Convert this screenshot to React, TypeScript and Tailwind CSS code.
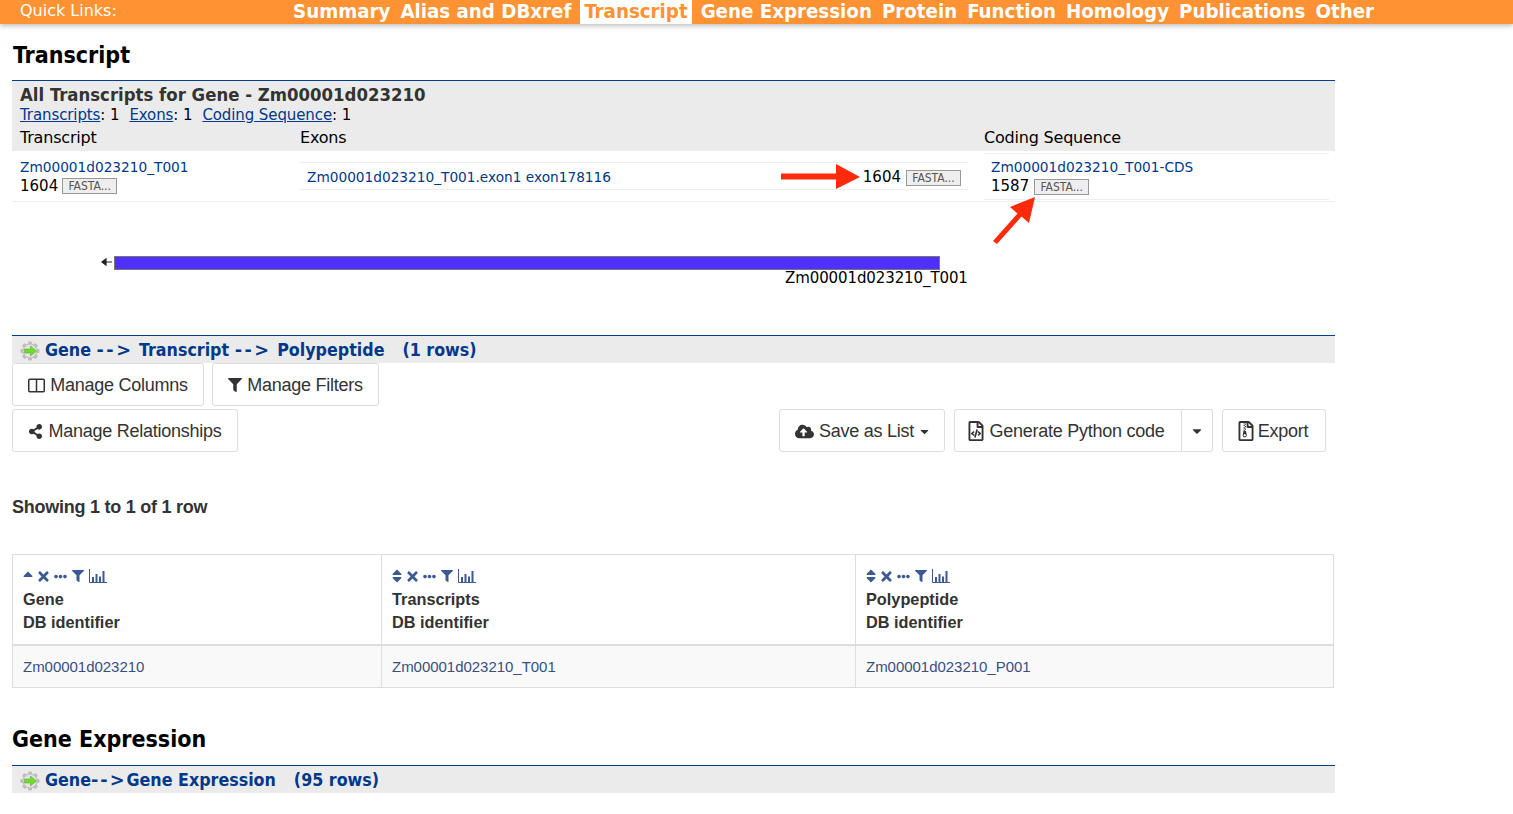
import { FC, ReactNode } from 'react'
import { FaCaretDown, FaCloudUploadAlt, FaEllipsisH, FaFilter, FaRegFileArchive, FaRegFileCode, FaShareAlt, FaSort, FaSortUp, FaTimes } from 'react-icons/fa'

const links = ['Summary', 'Alias and DBxref', 'Transcript', 'Gene Expression', 'Protein', 'Function', 'Homology', 'Publications', 'Other']

const GearIcon = () => (
  <svg width="20" height="20" viewBox="0 0 20 20" className="shrink-0">
    <g fill="#bdbdbd">
      <circle cx="10" cy="10" r="7.5" />
      <rect x="8" y="0.5" width="4" height="19" rx="1" />
      <rect x="0.5" y="8" width="19" height="4" rx="1" />
      <rect x="8" y="0.5" width="4" height="19" rx="1" transform="rotate(45 10 10)" />
      <rect x="8" y="0.5" width="4" height="19" rx="1" transform="rotate(-45 10 10)" />
    </g>
    <circle cx="10" cy="10" r="6.500" fill="#e4e4e4" />
    <path d="M4.500 8h6V5l6 5-6 5v-3h-6z" fill="#6fdc2e" stroke="#4aa81f" strokeWidth="0.5" />
  </svg>
)

const ColumnsIcon = () => (
  <svg width="17" height="15" viewBox="0 0 17 15" className="shrink-0">
    <rect x="0.75" y="1.25" width="15.5" height="12.5" rx="1" fill="none" stroke="#333" strokeWidth="1.5" />
    <path d="M8.5 1.25v12.5" stroke="#333" strokeWidth="1.5" />
  </svg>
)

const BarsIcon = () => (
  <svg width="18" height="14" viewBox="0 0 18 14" className="shrink-0">
    <path d="M.5 0v13.5H18" fill="none" stroke="#3b5a94" />
    <path d="M3 8h2v5H3zM6.500 5h2v8h-2zM10 7.500h2V13h-2zM13.500 2h2v11h-2z" fill="#3b5a94" />
  </svg>
)

const Fasta = () => (
  <span className="inline-block w-[55px] h-[16px] border border-[#999] bg-[#eee] text-[#555] text-[12px] leading-[15px] text-center font-['DejaVu_Sans_Condensed','DejaVu_Sans',sans-serif]">
    FASTA...
  </span>
)

const A: FC<{ children: ReactNode; className?: string }> = ({ children, className = '' }) => (
  <a className={`text-[#00388a] cursor-pointer ${className}`}>{children}</a>
)

const Btn: FC<{ children: ReactNode; className?: string }> = ({ children, className = '' }) => (
  <button className={`h-[43px] pt-[1px] flex items-center justify-center gap-[5px] bg-white border border-[#ddd] rounded-[3px] text-[18px] text-[#333] tracking-[-0.25px] ${className}`}>
    {children}
  </button>
)

const Arrow: FC<{ className: string }> = ({ className }) => (
  <span className={`font-['DejaVu_Sans',sans-serif] ${className}`}>--&gt;</span>
)

const SectionBar: FC<{ children: ReactNode }> = ({ children }) => (
  <div className="w-[1323px] h-[28px] pt-[2px] border-t border-[#003d8f] bg-[#ebebeb] flex items-center pl-[8px] gap-[5px] text-[#00388a] text-[17.700px] font-bold font-['DejaVu_Sans_Condensed','DejaVu_Sans',sans-serif]">
    <GearIcon />
    {children}
  </div>
)

const ColIcons: FC<{ first?: boolean }> = ({ first }) => (
  <div className="flex items-center gap-[5px] h-[16px] text-[#3b5a94]">
    {first ? <FaSortUp className="w-[10px] h-[16px] mt-[3px]" /> : <FaSort className="w-[10px] h-[16px]" />}
    <FaTimes className="w-[11px] h-[15px]" />
    <FaEllipsisH className="w-[13px] h-[13px]" />
    <FaFilter className="w-[12px] h-[12px]" />
    <BarsIcon />
  </div>
)

const columns = [
  { title: 'Gene', value: 'Zm00001d023210', width: 'w-[368px]' },
  { title: 'Transcripts', value: 'Zm00001d023210_T001', width: 'w-[474px]' },
  { title: 'Polypeptide', value: 'Zm00001d023210_P001', width: 'flex-1' },
]

export default function App() {
  return (
    <div className="w-[1513px] h-[814px] overflow-hidden bg-white font-['DejaVu_Sans',sans-serif] text-black relative">
      {/* quick links */}
      <div className="h-[24px] bg-[#ff9233] shadow-[0_2px_5px_rgba(0,0,0,0.25)] relative overflow-hidden">
        <span className="absolute left-[20px] top-[1px] text-[16px] leading-[20px] text-white">Quick Links:</span>
        <div className="absolute left-[292px] top-0 flex gap-[8px] text-white font-bold text-[20.300px] leading-[22px] font-['DejaVu_Sans_Condensed','DejaVu_Sans',sans-serif] whitespace-nowrap">
          {links.map((l) => (
            <span key={l} className={l === 'Transcript' ? 'bg-white text-[#ff9233] px-[4px] h-[24px]' : 'px-[1px]'}>{l}</span>
          ))}
        </div>
      </div>

      <div className="px-[12px]">
        <h1 className="text-[23px] font-bold leading-[30px] mt-[16px] pl-[1px] font-['DejaVu_Sans_Condensed','DejaVu_Sans',sans-serif]">Transcript</h1>

        <div className="mt-[10px] w-[1323px] border-t border-[#003d8f]">
          <div className="bg-[#ebebeb] h-[70px] px-[8px] pt-[4px] relative">
            <div className="text-[18.400px] leading-[20px] font-bold text-[#333] font-['DejaVu_Sans_Condensed','DejaVu_Sans',sans-serif]">All Transcripts for Gene - Zm00001d023210</div>
            <div className="text-[15px] leading-[20px] tracking-[-0.1px] flex gap-[10px]">
              <span><A className="underline">Transcripts</A>: 1</span>
              <span><A className="underline">Exons</A>: 1</span>
              <span><A className="underline">Coding Sequence</A>: 1</span>
            </div>
            <div className="flex text-[16px] leading-[20px] mt-[3px] tracking-[-0.2px]">
              <span className="w-[280px]">Transcript</span>
              <span className="w-[684px]">Exons</span>
              <span>Coding Sequence</span>
            </div>
          </div>
          <div className="flex h-[51px] border-b border-[#eee] text-[13.700px]">
            <div className="w-[288px] pl-[8px] pt-[7px] leading-[18px]">
              <A>Zm00001d023210_T001</A>
              <div className="text-[15px] flex items-center gap-[4px] mt-[1px]">1604 <Fasta /></div>
            </div>
            <div className="w-[668px] h-[28px] mt-[11px] pt-[2px] border-y border-[#eee] flex items-center justify-between pl-[7px] pr-[7px]">
              <A>Zm00001d023210_T001.exon1 exon178116</A>
              <span className="text-[15px] flex items-center gap-[5px]">1604 <span className="mt-[1px] flex"><Fasta /></span></span>
            </div>
            <div className="ml-[16px] w-[345px] h-[47px] mt-[2px] border-y border-[#eee] pl-[7px] pt-[4px] leading-[18px]">
              <A>Zm00001d023210_T001-CDS</A>
              <div className="text-[15px] flex items-center gap-[5px] mt-[1px]">1587 <span className="mt-[2px] flex"><Fasta /></span></div>
            </div>
          </div>
        </div>

        {/* gene model */}
        <div className="h-[133px] relative">
          <svg width="860" height="20" viewBox="0 0 860 20" className="absolute left-[88px] top-[50px]">
            <path d="M2 10h10M2 10l4-3v6z" stroke="#222" fill="#222" strokeWidth="1.2" />
            <rect x="14.500" y="4.500" width="825" height="13" fill="#5030ff" stroke="#777" />
          </svg>
          <span className="absolute left-[773px] top-[66px] text-[15px] leading-[20px] tracking-[-0.1px]">Zm00001d023210_T001</span>
        </div>

        <SectionBar>
          <span>Gene <Arrow className="tracking-[2.500px]" /> Transcript <Arrow className="tracking-[2.500px]" /> Polypeptide</span>
          <span className="ml-[13px]">(1 rows)</span>
        </SectionBar>

        <div className="font-['Liberation_Sans',sans-serif]">
          <div className="flex gap-[8px]">
            <Btn className="w-[192px]"><ColumnsIcon />Manage Columns</Btn>
            <Btn className="w-[167px]"><FaFilter size={14} />Manage Filters</Btn>
          </div>
          <div className="flex mt-[3px] w-[1314px]">
            <Btn className="w-[226px]"><FaShareAlt size={15} />Manage Relationships</Btn>
            <div className="flex ml-auto gap-[9px]">
              <Btn className="w-[166px] pl-[2px]"><FaCloudUploadAlt size={19} />Save as List<FaCaretDown size={13} className="-ml-[1px]" /></Btn>
              <div className="flex">
                <Btn className="w-[228px] rounded-r-none pr-[7px]"><FaRegFileCode size={20} className="translate-x-[2px]" />Generate Python code</Btn>
                <Btn className="w-[31px] rounded-l-none border-l-0"><FaCaretDown size={14} /></Btn>
              </div>
              <Btn className="w-[104px] pr-[7px]"><FaRegFileArchive size={20} className="translate-x-[3px]" />Export</Btn>
            </div>
          </div>

          <div className="mt-[45px] text-[18px] leading-[20px] font-bold text-[#333] tracking-[-0.25px]">Showing 1 to 1 of 1 row</div>

          <div className="mt-[37px] w-[1322px] border border-[#ddd] text-[#333]">
            <div className="flex h-[91px] border-b-2 border-[#ddd] font-bold text-[16.300px] leading-[23px]">
              {columns.map((c, i) => (
                <div key={c.title} className={`${c.width} ${i > 0 ? 'border-l border-[#ddd]' : ''} pl-[10px] pt-[13px]`}>
                  <ColIcons first={i === 0} />
                  <div className="mt-[4px]">{c.title}</div>
                  <div>DB identifier</div>
                </div>
              ))}
            </div>
            <div className="flex h-[41px] bg-[#f9f9f9] text-[15px] tracking-[-0.03px] text-[#375080]">
              {columns.map((c, i) => (
                <div key={c.title} className={`${c.width} ${i > 0 ? 'border-l border-[#ddd]' : ''} pl-[10px] pt-[2px] flex items-center`}>{c.value}</div>
              ))}
            </div>
          </div>
        </div>

        <h1 className="text-[23px] font-bold leading-[30px] mt-[36px] font-['DejaVu_Sans_Condensed','DejaVu_Sans',sans-serif]">Gene Expression</h1>
        <div className="mt-[11px]">
          <SectionBar>
            <span>Gene<Arrow className="tracking-[2px]" />Gene Expression</span>
            <span className="ml-[13px]">(95 rows)</span>
          </SectionBar>
        </div>
      </div>

      {/* annotation arrows */}
      <svg width="90" height="30" viewBox="0 0 90 30" className="absolute left-[775px] top-[160px]">
        <path d="M6 13.500h55V4l24 13-24 12v-9.500H6z" fill="#ff2a0a" />
      </svg>
      <svg width="50" height="54" viewBox="0 0 50 54" className="absolute left-[990px] top-[194px]">
        <path d="M3 47L27.500 19.500L20 13L45 3L39 29L31.500 22.500L7 50z" fill="#ff2a0a" />
      </svg>
    </div>
  )
}
